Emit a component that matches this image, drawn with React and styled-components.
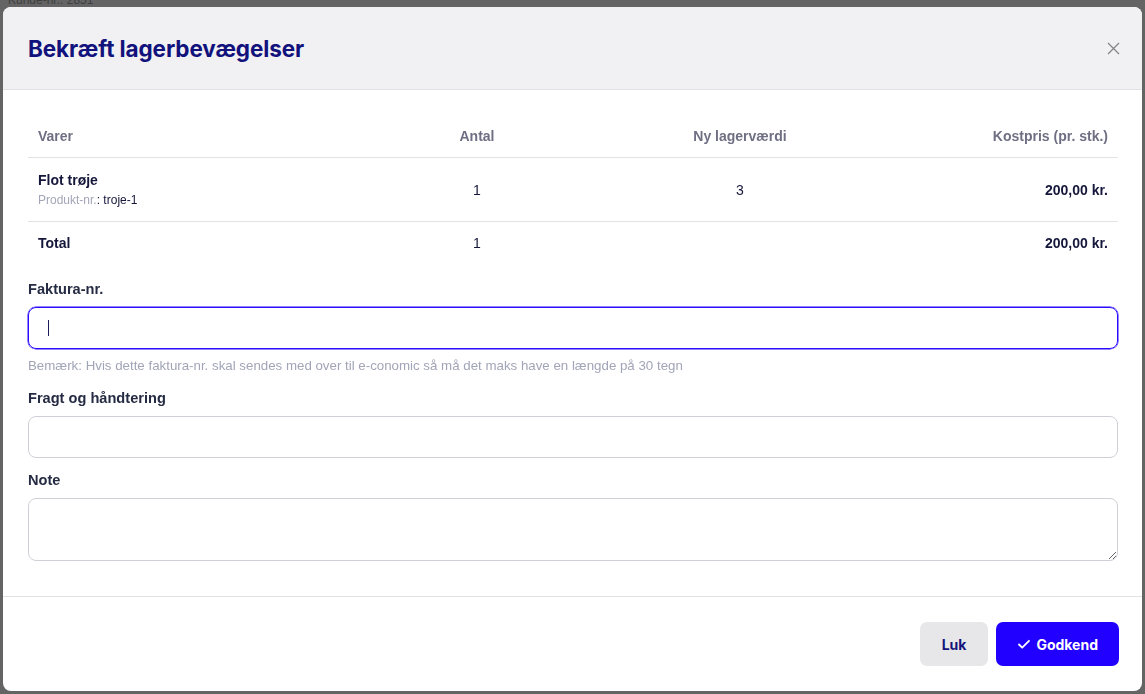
import React from "react";
import styled, { createGlobalStyle } from "styled-components";

const Global = createGlobalStyle`
  * { box-sizing: border-box; }
  html, body { margin: 0; padding: 0; height: 100%; }
  body { background: #646464; font-family: "Liberation Sans", Arial, sans-serif; overflow: hidden; }
`;

const Backdrop = styled.div`
  height: 694px;
  padding: 0 8px;
  color: #3f3f3f;
  font-size: 12px;
  line-height: 1;
  margin-top: -6px;
`;

const Overlay = styled.div`
  position: fixed;
  inset: 0;
  padding: 7px 3px 3px 3px;
  display: flex;
`;

const Modal = styled.div`
  flex: 1;
  background: #fff;
  border-radius: 8px;
  display: flex;
  flex-direction: column;
  overflow: hidden;
`;

const Header = styled.div`
  height: 83px;
  flex-shrink: 0;
  background: #f1f1f4;
  border-bottom: 1px solid #e2e2e6;
  display: flex;
  align-items: center;
  justify-content: space-between;
  padding: 0 19px 0 25px;
`;

const Title = styled.h2`
  margin: 0;
  font-family: Inter, "Liberation Sans", sans-serif;
  font-weight: 700;
  font-size: 22.5px;
  letter-spacing: -0.1px;
  color: #12127c;
`;

const CloseButton = styled.button`
  border: 0;
  background: transparent;
  padding: 0;
  width: 20px;
  height: 20px;
  display: flex;
  align-items: center;
  justify-content: center;
  color: #85858a;
  cursor: pointer;
`;

const Body = styled.div`
  flex: 1;
  padding: 24px 24px 0 25px;
  border-bottom: 1px solid #e2e2e6;
`;

const Row = styled.div`
  display: grid;
  grid-template-columns: 324px 230px 296px 1fr;
  align-items: center;
  height: ${(p) => p.$h}px;
  border-bottom: ${(p) => (p.$border ? "1px solid #e3e3e6" : "none")};
  padding: 0 10px;
  font-size: 14px;
  color: #14163a;
`;

const HeadCell = styled.div`
  font-size: 14px;
  font-weight: 700;
  color: #6f6f84;
  text-align: ${(p) => p.$align || "left"};
`;

const Cell = styled.div`
  text-align: ${(p) => p.$align || "left"};
  font-weight: ${(p) => (p.$bold ? 700 : 400)};
  color: #14163a;
`;

const ItemName = styled.div`
  font-weight: 700;
  font-size: 14px;
  line-height: 18px;
`;

const ItemSub = styled.div`
  margin-top: 3px;
  font-size: 12px;
  line-height: 16px;
  color: #14163a;
  span { color: #a3a6b8; }
`;

const Form = styled.div`
  margin-top: 16px;
  display: flex;
  flex-direction: column;
`;

const Field = styled.div`
  display: flex;
  flex-direction: column;
  margin-bottom: ${(p) => p.$mb || 13}px;
`;

const Label = styled.label`
  font-size: 14.6px;
  font-weight: 700;
  line-height: 18px;
  color: #262b44;
  margin-bottom: 9px;
`;

const Input = styled.div`
  height: 42px;
  border: 1px solid ${(p) => (p.$focus ? "#2a0cff" : "#cfd0d6")};
  box-shadow: ${(p) => (p.$focus ? "0 0 0 0.5px #2a0cff" : "none")};
  border-radius: 8px;
  display: flex;
  align-items: center;
  padding-left: 19px;
`;

const Caret = styled.span`
  width: 1px;
  height: 16px;
  background: #1c1c5a;
`;

const Hint = styled.div`
  margin-top: 9px;
  font-size: 13.3px;
  line-height: 16px;
  color: #a2a5b7;
`;

const TextArea = styled.textarea`
  height: 63px;
  border: 1px solid #cfd0d6;
  border-radius: 8px;
  resize: vertical;
  font-family: inherit;
  outline: none;
`;

const Footer = styled.div`
  display: flex;
  justify-content: flex-end;
  gap: 8px;
  padding: 25px 23px 25px 25px;
`;

const Button = styled.button`
  height: 44px;
  border: 0;
  border-radius: 7px;
  padding: 0 ${(p) => (p.$primary ? 21 : 22)}px;
  background: ${(p) => (p.$primary ? "#2200ff" : "#e7e7e9")};
  color: ${(p) => (p.$primary ? "#fff" : "#14147a")};
  font-family: Inter, "Liberation Sans", sans-serif;
  font-weight: 700;
  font-size: 14px;
  display: flex;
  align-items: center;
  gap: 5px;
  cursor: pointer;
`;

export default function App() {
  return (
    <>
      <Global />
      <Backdrop>Kunde-nr.: 2851</Backdrop>
      <Overlay>
        <Modal>
          <Header>
            <Title>Bekræft lagerbevægelser</Title>
            <CloseButton aria-label="Luk">
              <svg width="13" height="13" viewBox="0 0 13 13" fill="none" stroke="currentColor" strokeWidth="1.3">
                <path d="M1 1l11 11M12 1L1 12" />
              </svg>
            </CloseButton>
          </Header>
          <Body>
            <Row $h={44} $border>
              <HeadCell>Varer</HeadCell>
              <HeadCell $align="center">Antal</HeadCell>
              <HeadCell $align="center">Ny lagerværdi</HeadCell>
              <HeadCell $align="right">Kostpris (pr. stk.)</HeadCell>
            </Row>
            <Row $h={64} $border>
              <div>
                <ItemName>Flot trøje</ItemName>
                <ItemSub><span>Produkt-nr.</span>: troje-1</ItemSub>
              </div>
              <Cell $align="center">1</Cell>
              <Cell $align="center">3</Cell>
              <Cell $align="right" $bold>200,00 kr.</Cell>
            </Row>
            <Row $h={42}>
              <Cell $bold>Total</Cell>
              <Cell $align="center">1</Cell>
              <Cell />
              <Cell $align="right" $bold>200,00 kr.</Cell>
            </Row>
            <Form>
              <Field $mb={15}>
                <Label>Faktura-nr.</Label>
                <Input $focus><Caret /></Input>
                <Hint>Bemærk: Hvis dette faktura-nr. skal sendes med over til e-conomic så må det maks have en længde på 30 tegn</Hint>
              </Field>
              <Field>
                <Label>Fragt og håndtering</Label>
                <Input />
              </Field>
              <Field $mb={35}>
                <Label>Note</Label>
                <TextArea />
              </Field>
            </Form>
          </Body>
          <Footer>
            <Button>Luk</Button>
            <Button $primary>
              <svg width="14" height="14" viewBox="0 0 14 14" fill="none" stroke="currentColor" strokeWidth="1.8" strokeLinecap="round" strokeLinejoin="round">
                <path d="M2 7.5l3.2 3.2L12 3.8" />
              </svg>
              Godkend
            </Button>
          </Footer>
        </Modal>
      </Overlay>
    </>
  );
}
